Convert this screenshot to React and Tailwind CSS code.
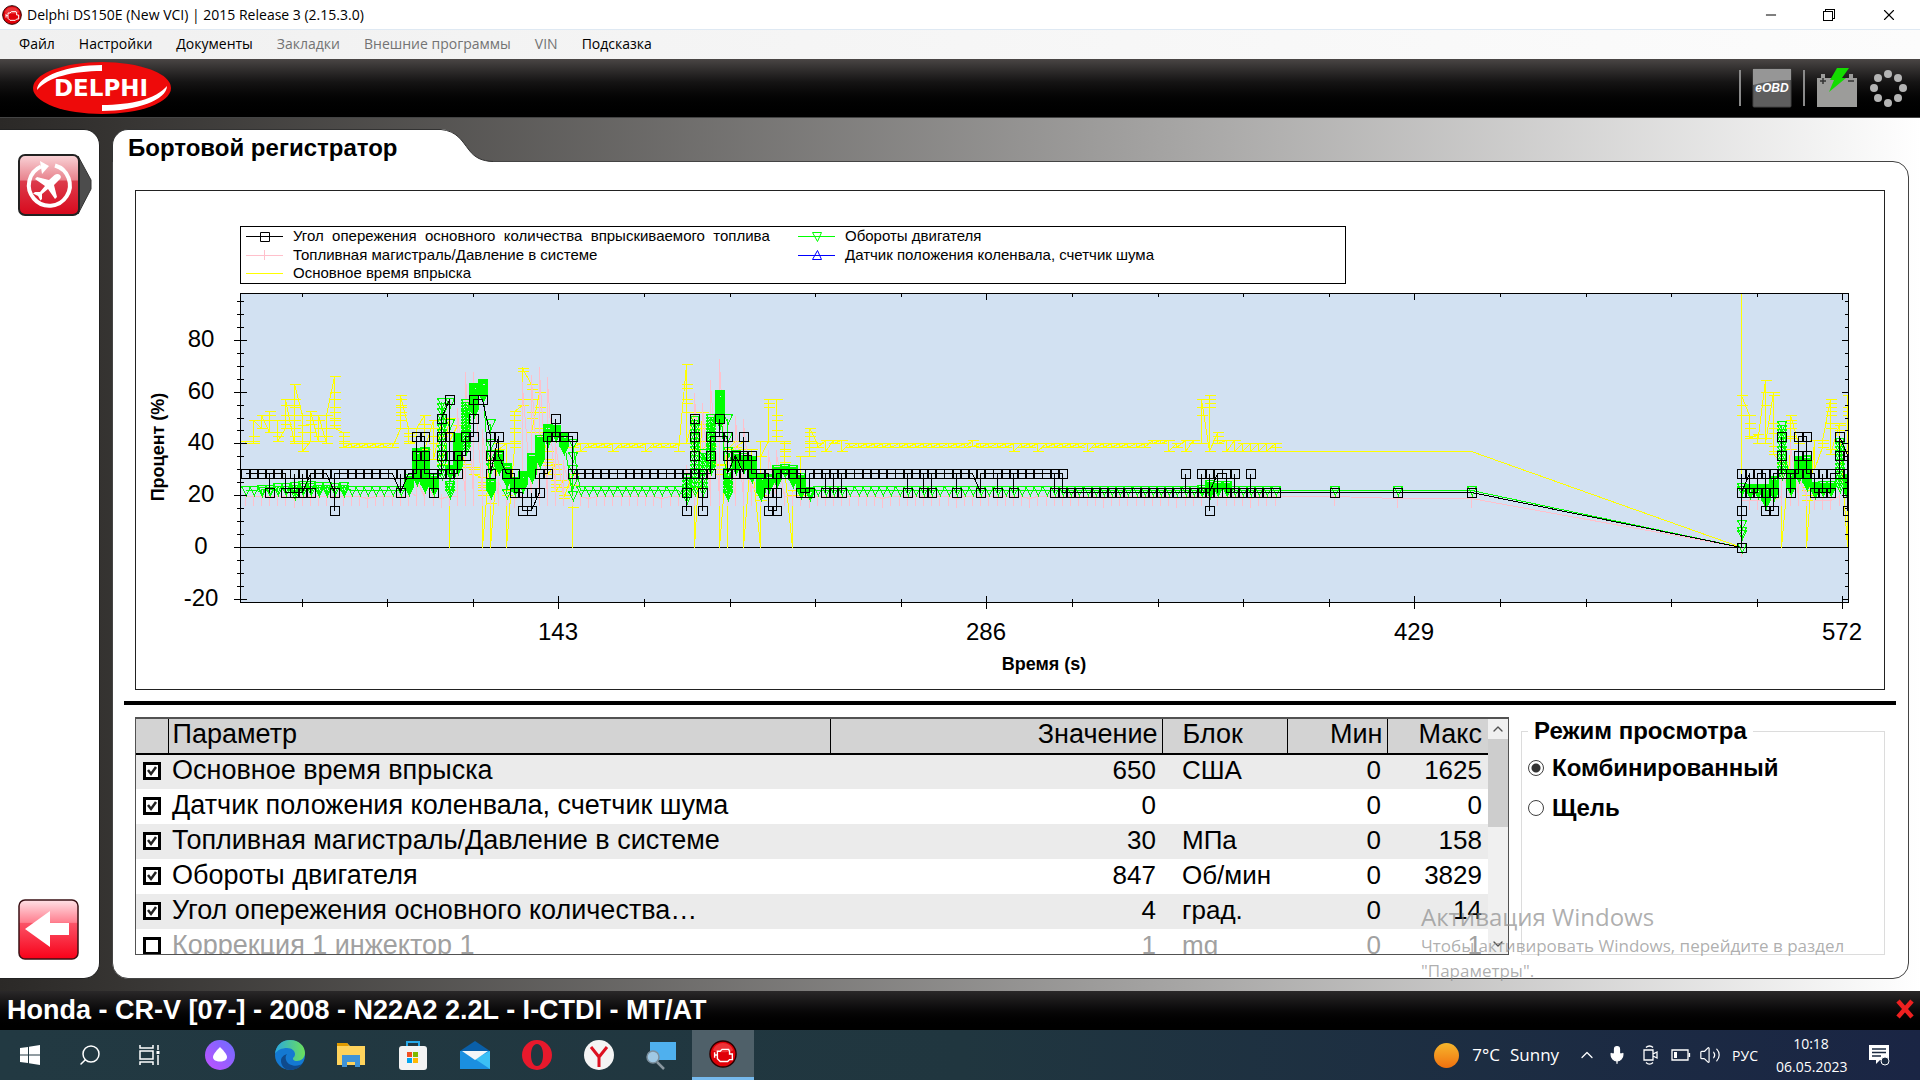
import { useState } from "react"
import { Minus, X, Search, ChevronUp, ChevronDown, Mic, Volume2 } from "lucide-react"
import clsx from "clsx"

// ---- chart geometry ----
const PLOT = { left: 104, right: 1712, top: 102, bottom: 412 }
const ZERO_Y = 356
const UNIT = 2.59
const STEP = 8.175

const px = (k) => Math.round(108.5 + k * STEP)
const py = (v) => Math.round(ZERO_Y - v * UNIT)

const range = (from, to) => Array.from({ length: to - from + 1 }, (_, i) => from + i)

// slow samples between the idle part and the restart
const TAIL = [133.3, 141, 150]
const COLUMNS = [...range(0, 126), ...TAIL, ...range(183, 196)]

// injection angle: every digit is one step of 1/14
const ANGLE = {
  3: "434", 5: "43", 6: "343", 7: "343", 8: "434", 11: "324", 19: "343", 21: "456", 22: "654", 23: "434",
  24: "4567", 25: "8654", 26: "45", 27: "56", 28: "678", 29: "8", 30: "654", 31: "65", 32: "4", 33: "43",
  34: "32", 35: "232", 36: "34", 37: "46", 38: "676", 39: "6", 40: "64", 54: "4324", 55: "45674",
  56: "4234", 57: "456", 58: "676", 59: "654", 60: "545", 61: "4565", 62: "54", 64: "432", 65: "234",
  68: "43", 69: "34", 71: "434", 72: "434", 73: "434", 81: "434", 83: "434", 84: "434", 87: "434",
  90: "34", 92: "434", 94: "434", 99: "434", 100: "43", 115: "343", 117: "343", 118: "3423", 119: "434",
  120: "43", 121: "343", 123: "343", 183: "02343", 184: "43", 185: "34", 186: "432", 187: "234",
  188: "4564", 189: "434", 190: "456", 191: "654", 192: "43", 193: "343", 194: "34", 195: "456", 196: "54323",
}

// engine speed: [low, high, step]
const SPEED = {
  2: [21.5, 23, 1], 3: [21.5, 23, 1], 4: [22, 23.5, 1], 5: [22, 23, 1], 6: [20.5, 24, 1], 7: [22, 24.5, 1],
  8: [22, 24, 1], 9: [21.5, 23.5, 1], 10: [21.5, 23.5, 1], 11: [22, 23.5, 1], 12: [21.5, 23.5, 1],
  20: [22, 26.5], 21: [26, 37], 22: [23, 37], 23: [22, 26.5], 24: [28, 56, 2], 25: [28, 30], 26: [30, 43],
  27: [38, 56, 1.1], 28: [52, 62], 29: [58, 63.5], 30: [21, 25], 31: [30, 36], 32: [25, 31], 33: [22, 26],
  34: [23, 28], 35: [27, 35], 36: [33, 42], 37: [41, 46], 38: [43, 46], 39: [38, 43], 40: [20, 40, 5],
  54: [19, 28, 1.3], 55: [22, 50, 1.7], 56: [22, 37, 1.6], 57: [30, 50, 1.1], 58: [48, 59.5], 59: [20, 29, 1],
  60: [30, 36], 61: [31, 35], 62: [27, 34], 63: [20, 27], 64: [23, 27], 65: [25, 30], 66: [29, 30.5],
  67: [25, 30], 68: [21, 27], 69: [20, 22], 117: [21.5, 23, 1], 118: [21, 24.5], 119: [21.5, 24], 120: [21.5, 24],
  184: [21, 23], 185: [21, 23], 186: [17, 23], 187: [20, 26], 188: [28, 48, 1.6], 189: [22, 29],
  190: [27, 34], 191: [24, 34], 192: [21, 24], 193: [21.5, 24], 194: [21.5, 24], 195: [23, 42, 1.6], 196: [20, 27],
}
const SPEED_EXTRA = { 25: [56, 48, 30, 24, 23, 22, 21], 30: [48, 40, 36, 31], 32: [21], 59: [50, 43, 37], 183: [0, 5, 6, 9, 23, 22] }

// rail pressure: peak over the idle level
const PRESSURE = {
  20: 22, 21: 26, 22: 25, 26: 52, 27: 66, 28: 66, 29: 44, 30: 38, 31: 25, 34: 62, 35: 65, 36: 68, 37: 64,
  38: 40, 39: 32, 40: 30, 54: 30, 55: 58, 56: 54, 57: 63, 58: 71, 59: 38, 60: 49, 61: 48, 62: 24, 64: 36, 65: 36,
  188: 30, 189: 39, 190: 27, 191: 30, 195: 28, 196: 30,
}

// injection time
const TIME = {
  0: [41, 40], 1: [40, 41, 43, 49], 2: [46, 49, 51], 3: [44.5, 51, 52.5, 49], 4: [49, 44.5, 43, 41],
  5: [46, 47.5, 49, 51, 55, 57], 6: [40, 41, 43, 46, 49, 51, 54, 55, 57, 63], 7: [51, 47, 44.5, 41, 40, 37],
  8: [41, 44.5, 47.5, 49, 51, 52.5], 9: [41, 43, 46, 49, 51], 10: [40, 43, 46, 51],
  11: [66, 60, 57, 54, 52, 50, 49, 47, 46], 12: [44.5, 43, 41, 40, 38.5], 19: [46, 49, 51, 52, 54, 55, 57, 58.5],
  20: [46, 44, 43, 41, 40], 21: [41, 43, 46], 22: [51, 47.5, 46, 41, 38], 23: [49, 46, 43, 40, 34],
  24: [48, 43, 32], 25: [50, 44, 22, 0, 41], 26: [47, 41], 27: [32, 31], 28: [31, 30, 28], 29: [27, 25, 24, 23, 22, 20, 0],
  30: [37, 17, 0], 31: [40, 38], 32: [40, 22, 20, 0], 33: [38.5, 40, 41, 44.5, 46, 49, 51, 52.5],
  34: [55, 57, 68, 69], 35: [63, 61, 57, 52, 50, 44.5], 36: [60, 54, 52, 46, 44.5], 37: [37, 34, 33, 31.5, 30, 28],
  38: [32, 30, 28, 26, 24.5, 23, 21.5], 39: [26, 23, 20, 19], 40: [28, 24, 15.5, 0, 38.5],
  54: [70.8, 63, 61.5, 57, 55.5, 52, 40], 55: [52, 38, 23, 0], 56: [52, 47.5, 46, 41, 38], 57: [41, 39, 33],
  58: [32, 31.5, 30, 28, 0], 59: [38, 0, 38], 60: [41, 38.5], 61: [41, 38, 0], 62: [38, 35], 63: [0, 18, 20, 41, 35],
  64: [41, 54, 55.5, 57], 65: [57, 51, 49, 45, 43, 41], 66: [41, 40, 38, 37, 35, 33, 31], 67: [0, 22, 20], 68: [20, 30, 35],
  69: [35, 37, 38.5, 40, 41, 43, 44.5, 46], 71: [41.5, 37], 72: [41.5, 40], 73: [41.5, 37], 76: [40, 38.5],
  89: [41.5, 39], 94: [40, 37], 97: [40, 37], 103: [40, 37], 111: [41.5, 40], 112: [41.5, 40], 113: [41.5, 37],
  115: [41.5, 37], 116: [41.5, 40], 117: [40, 51, 54, 57], 118: [37, 54, 55.5, 57, 58.5, 37], 119: [44.5, 43, 41.5, 40],
  120: [41.5, 37], 121: [41.5, 37], 126: [40, 38.5, 37],
  183: [0, 120, 58.5, 55, 51, 58.5], 184: [51, 48, 46, 43, 42], 185: [43.5, 42, 40], 186: [64.5, 60, 55, 42, 40],
  187: [60, 58.5, 48, 46, 44, 39, 37, 36], 188: [33, 32, 30, 0], 189: [38, 42, 43, 46, 48, 49, 51], 190: [40, 32, 30],
  191: [30, 23, 22, 20, 18, 0], 192: [41.5, 30], 193: [38.5, 40, 41.5], 194: [57, 55.5, 54, 52.5, 51, 48, 46, 38, 36],
  195: [48, 47, 45], 196: [0, 51, 52.5, 54, 58.5],
}

const angleAt = (k) => [...(ANGLE[k] || (k > 100 && k < 183 ? "3" : "4"))].map((d) => (Number(d) * 100) / 14)

function speedAt(k) {
  const out = []
  if (SPEED[k]) {
    const [low, high, step = 0.45] = SPEED[k]
    for (let v = low; v <= high; v += step) out.push(v)
  }
  if (SPEED_EXTRA[k]) out.push(...SPEED_EXTRA[k])
  return out.length ? out : [22.2]
}

const pressureAt = (k) => (PRESSURE[k] ? [19.5, PRESSURE[k]] : k === 183 ? [0, 18] : [k > 183 ? 18 : k % 9 === 6 ? 19 : 19.6])

function timeAt(k) {
  if (TIME[k]) return TIME[k]
  if (k > 126) return [36.9]
  if (k > 40 && k % 4 === 1 && k < 54) return [40, 37]
  if (k > 120) return [40, 37]
  return [40, 38.5]
}

const pointsOf = (valuesAt) => COLUMNS.flatMap((k) => valuesAt(k).map((v) => [px(k), py(v)]))
const linePath = (points) => "M" + points.map((p) => p.join(" ")).join("L")

const markers = {
  square: (x, y) => `M${x - 4} ${y - 4}h9v9h-9z`,
  triangleDown: (x, y) => `M${x - 4} ${y - 4}h9l-4 9z`,
  triangleUp: (x, y) => `M${x - 4} ${y + 4}h9l-4 -9z`,
  plus: (x, y) => `M${x} ${y - 5}v14`,
  dash: (x, y) => `M${x - 5} ${y}h11`,
}

const angle = pointsOf(angleAt)
const speed = pointsOf(speedAt)
const pressure = pointsOf(pressureAt)
const time = pointsOf(timeAt)

const series = [
  { id: "time", color: "#ffff00", points: time, marker: "dash", skip: (p) => p[1] === ZERO_Y || TAIL.some((k) => px(k) === p[0]) },
  { id: "pressure", color: "#ffc0cb", points: pressure, marker: "plus" },
  { id: "speed", color: "#00ff00", points: speed, marker: "triangleDown" },
  { id: "angle", color: "#000000", points: angle, marker: "square" },
]

// the recorder separates the words of the long name with two blanks
const legend = [
  { x: 110, y: 45, color: "#000000", marker: "square", text: "Угол опережения основного количества впрыскиваемого топлива".replaceAll(" ", "\u00a0 ") },
  { x: 110, y: 64, color: "#ffc0cb", marker: "plus", text: "Топливная магистраль/Давление в системе" },
  { x: 110, y: 82, color: "#ffff00", marker: null, text: "Основное время впрыска" },
  { x: 662, y: 45, color: "#00ff00", marker: "triangleDown", text: "Обороты двигателя" },
  { x: 662, y: 64, color: "#0000ff", marker: "triangleUp", text: "Датчик положения коленвала, счетчик шума" },
]

function Chart() {
  const xMinor = range(0, 17).map((i) => Math.round(165.6 + i * 85.6))
  const yMinor = range(-4, 19).map((i) => py(i * 5))
  return (
    <svg viewBox="0 0 1748 498" className="block w-full" role="img" aria-label="Процент / Время" fontFamily="Liberation Sans, Arial, sans-serif">
      <defs>
        <clipPath id="plot">
          <rect x={PLOT.left} y={PLOT.top} width={PLOT.right - PLOT.left} height={PLOT.bottom - PLOT.top} />
        </clipPath>
      </defs>

      <rect x="104.5" y="35.5" width="1105" height="57" fill="white" stroke="black" />
      {legend.map((item) => (
        <g key={item.text}>
          <path d={`M${item.x} ${item.y + 0.5}h37`} stroke={item.color} fill="none" />
          {item.marker && (
            <path
              d={item.marker === "plus" ? `M${item.x + 18.5} ${item.y - 5}v10` : markers[item.marker](item.x + 18.5, item.y + 0.5)}
              stroke={item.color}
              fill="none"
            />
          )}
          <text x={item.x + 47} y={item.y + 5} fontSize="15">{item.text}</text>
        </g>
      ))}

      <rect x="104.5" y="102.5" width="1608" height="309" fill="#d2e1f2" />
      <path d={`M104 ${ZERO_Y + 0.5}H1712`} stroke="black" />
      <g clipPath="url(#plot)" fill="none" shapeRendering="crispEdges" transform="translate(0.5 0.5)">
        {series.map((s) => (
          <g key={s.id} stroke={s.color}>
            <path d={linePath(s.points)} />
            <path d={s.points.filter((p) => !s.skip || !s.skip(p)).map((p) => markers[s.marker](p[0], p[1])).join("")} />
          </g>
        ))}
      </g>
      <rect x="104.5" y="102.5" width="1608" height="309" fill="none" stroke="black" />

      <g stroke="black" fill="none" shapeRendering="crispEdges">
        {xMinor.map((x) => <path key={x} d={`M${x + 0.5} 408v8M${x + 0.5} 102v4`} />)}
        {yMinor.map((y) => <path key={y} d={`M101 ${y + 0.5}h7M1709 ${y + 0.5}h4`} />)}
        {[422, 850, 1278, 1706].map((x) => <path key={x} d={`M${x + 0.5} 405v13M${x + 0.5} 102v7`} />)}
        {[-20, 0, 20, 40, 60, 80].map((v) => <path key={v} d={`M98 ${py(v) + 0.5}h13M1706 ${py(v) + 0.5}h6`} />)}
      </g>

      <g fontSize="24" textAnchor="middle">
        {[-20, 0, 20, 40, 60, 80].map((v) => <text key={v} x="65" y={py(v) + 7}>{v}</text>)}
        {[143, 286, 429, 572].map((v, i) => <text key={v} x={422 + i * 428} y="449">{v}</text>)}
      </g>
      <g fontSize="18" fontWeight="bold" textAnchor="middle">
        <text x="908" y="479">Время (s)</text>
        <text transform="translate(28 256) rotate(-90)">Процент (%)</text>
      </g>
    </svg>
  )
}

function EngineIcon({ className }) {
  return (
    <svg viewBox="0 0 30 30" className={className}>
      <circle cx="15" cy="15" r="14" fill="#e00008" stroke="#2a0000" strokeWidth="1.5" />
      <path d="M4 11a11.500 11 0 0 1 22 0c-6 3-16 3-22 0z" fill="#ff8080" opacity=".4" />
      <path d="M6 13v6M6 16h3v-4h3l2-2h7l1 2v3h3v6h-3l-2 2h-8l-3-3H9v-4" fill="none" stroke="white" strokeWidth="1.5" />
    </svg>
  )
}

function DelphiLogo() {
  return (
    <svg viewBox="0 0 138 52" className="h-[52px] w-[138px]" role="img" aria-label="Delphi">
      <ellipse cx="69" cy="26" rx="69" ry="26" fill="#ee0a0a" />
      <path d="M69 3v6C40 9 15 15 4 28 4 14 35 3 69 3z" fill="white" />
      <path d="M69 49v-6c29 0 54-6 65-19 0 14-31 25-65 25z" fill="white" />
      <text x="68" y="34" textAnchor="middle" fontFamily="DejaVu Sans, sans-serif" fontWeight="bold" fontSize="23" fill="white">DELPHI</text>
    </svg>
  )
}

const menu = [
  { text: "Файл" },
  { text: "Настройки" },
  { text: "Документы" },
  { text: "Закладки", disabled: true },
  { text: "Внешние программы", disabled: true },
  { text: "VIN", disabled: true },
  { text: "Подсказка" },
]

const rows = [
  { name: "Основное время впрыска", value: 650, unit: "США", min: 0, max: 1625, on: true },
  { name: "Датчик положения коленвала, счетчик шума", value: 0, unit: "", min: 0, max: 0, on: true },
  { name: "Топливная магистраль/Давление в системе", value: 30, unit: "МПа", min: 0, max: 158, on: true },
  { name: "Обороты двигателя", value: 847, unit: "Об/мин", min: 0, max: 3829, on: true },
  { name: "Угол опережения основного количества…", value: 4, unit: "град.", min: 0, max: 14, on: true },
  { name: "Коррекция 1 инжектор 1", value: 1, unit: "mg", min: 0, max: 1, on: false },
]

function ParameterTable() {
  const [checked, setChecked] = useState(rows.map((r) => r.on))
  const toggle = (i) => setChecked(checked.map((c, j) => (j === i ? !c : c)))

  return (
    <div className="flex h-[238px] flex-1 overflow-hidden border border-t-2 border-neutral-600">
      <div className="flex-1">
        <table className="w-full table-fixed border-collapse text-[26px] leading-[30px]">
          <colgroup>
            <col className="w-8" />
            <col />
            <col className="w-[332px]" />
            <col className="w-[125px]" />
            <col className="w-[100px]" />
            <col className="w-[101px]" />
          </colgroup>
          <thead>
            <tr className="h-[35px] border-b-2 border-black bg-[#d3d3d3] text-left text-[27px]">
              <th className="border-r border-black p-0"></th>
              <th className="border-r border-black p-0 pb-1 pl-1 font-normal">Параметр</th>
              <th className="border-r border-black p-0 pr-1 pb-1 text-right font-normal">Значение</th>
              <th className="border-r border-black p-0 pb-1 pl-5 font-normal">Блок</th>
              <th className="border-r border-black p-0 pr-1 pb-1 text-right font-normal">Мин</th>
              <th className="p-0 pr-[6px] pb-1 text-right font-normal">Макс</th>
            </tr>
          </thead>
          <tbody>
            {rows.map((row, i) => (
              <tr key={row.name} className={clsx("h-[35px] odd:bg-[#ebebeb]", !row.on && "text-neutral-400")}>
                <td className="p-0 pb-[2px] pl-[7px]">
                  <span className="relative block size-[18px]">
                    <input
                      type="checkbox"
                      id={"param" + i}
                      checked={checked[i]}
                      onChange={() => toggle(i)}
                      className="block size-[18px] appearance-none border-3 border-black bg-white"
                    />
                    {checked[i] && (
                      <svg viewBox="0 0 18 18" className="pointer-events-none absolute inset-0">
                        <path d="M5 8l3 4 5-7" fill="none" stroke="#222" strokeWidth="2.5" />
                      </svg>
                    )}
                  </span>
                </td>
                <td className="truncate p-0 pb-1 pl-1 text-[27px]"><label htmlFor={"param" + i}>{row.name}</label></td>
                <td className="p-0 pr-[6px] pb-1 text-right">{row.value}</td>
                <td className="p-0 pb-1 pl-5">{row.unit}</td>
                <td className="p-0 pr-[6px] pb-1 text-right">{row.min}</td>
                <td className="p-0 pr-[6px] pb-1 text-right">{row.max}</td>
              </tr>
            ))}
          </tbody>
        </table>
      </div>
      <div className="flex w-5 flex-col items-center bg-[#f0f0f0]">
        <button type="button" aria-label="Вверх" className="flex h-5 items-center"><ChevronUp className="size-4 text-neutral-600" /></button>
        <div className="h-[88px] w-full bg-[#cdcdcd]"></div>
        <button type="button" aria-label="Вниз" className="mt-auto flex h-5 items-center"><ChevronDown className="size-4 text-neutral-600" /></button>
      </div>
    </div>
  )
}

function ViewMode() {
  const [mode, setMode] = useState("combined")
  const modes = [
    { id: "combined", text: "Комбинированный" },
    { id: "split", text: "Щель" },
  ]
  return (
    <fieldset className="h-[238px] w-[364px] border border-[#dcdcdc] pl-[6px] text-2xl font-bold">
      <legend className="ml-0 px-[6px] leading-[28px]">Режим просмотра</legend>
      <div className="flex flex-col gap-3 pt-[9px]">
        {modes.map((m) => (
          <label key={m.id} className="flex items-center gap-2 leading-[28px]">
            <input
              type="radio"
              name="mode"
              checked={mode === m.id}
              onChange={() => setMode(m.id)}
              className="size-4 appearance-none rounded-full border border-neutral-700 bg-white checked:bg-[radial-gradient(circle,#333_0_4px,#fff_5px)]"
            />
            {m.text}
          </label>
        ))}
      </div>
    </fieldset>
  )
}

function Sidebar() {
  return (
    <aside className="flex w-[100px] flex-col justify-between rounded-r-2xl border-y border-r border-[#222] bg-white pt-6 pb-[18px] pl-[18px]">
      <button type="button" aria-label="Бортовой регистратор" className="w-fit">
        <svg viewBox="0 0 74 62" className="h-[62px] w-[74px]">
          <defs>
            <linearGradient id="red1" x2="0" y2="1">
              <stop offset="0" stopColor="#f9d4d8" />
              <stop offset=".42" stopColor="#e8828c" />
              <stop offset=".43" stopColor="#dc3c4c" />
              <stop offset="1" stopColor="#d8081c" />
            </linearGradient>
          </defs>
          <path d="M60 2l13 24v9L60 60z" fill="#4c4c4c" stroke="#333" />
          <rect x="1" y="1" width="60" height="60" rx="6" fill="url(#red1)" stroke="#222" strokeWidth="2" />
          <path d="M37 11.500a20.500 20.500 0 1 1-14 1" fill="none" stroke="white" strokeWidth="4" />
          <path d="M22 7l9 5-7 8z" fill="white" />
          <path d="M42 21c1.500 1.500 1 3-.5 4.500L36 31l3 12-2 2-7-10-6 5v5l-1.500 1.500L20 42l-5-2.500 2-1.500h5l5-6-10-7 2-2 12 3 5.500-5c2-1.500 4-1.500 5.500 0z" fill="white" />
        </svg>
      </button>
      <button type="button" aria-label="Назад" className="w-fit">
        <svg viewBox="0 0 61 61" className="size-[61px]">
          <defs>
            <linearGradient id="red2" x2="0" y2="1">
              <stop offset="0" stopColor="#ffe1e6" />
              <stop offset=".38" stopColor="#ff7f8f" />
              <stop offset=".39" stopColor="#fb5468" />
              <stop offset="1" stopColor="#f80018" />
            </linearGradient>
          </defs>
          <rect x="1" y="1" width="59" height="59" rx="6" fill="url(#red2)" stroke="#3a1015" strokeWidth="1.500" />
          <path d="M7 30l25-18v12h19v12H32v12z" fill="white" />
        </svg>
      </button>
    </aside>
  )
}

function StatusIcons() {
  return (
    <div className="flex items-center gap-[11px] pr-[13px]">
      <span className="h-9 w-[2px] bg-[#8a8a8a]"></span>
      <svg viewBox="0 0 40 40" className="size-10">
        <rect x="1" y="1" width="38" height="38" rx="1" fill="#5e5e5e" stroke="#444" />
        <path d="M1 1h38v11C24 12 12 14 1 17z" fill="#969696" />
        <text x="20" y="24" textAnchor="middle" fontFamily="Liberation Sans, sans-serif" fontStyle="italic" fontWeight="bold" fontSize="12" fill="white">eOBD</text>
      </svg>
      <span className="h-9 w-[2px] bg-[#8a8a8a]"></span>
      <svg viewBox="0 0 42 40" className="h-10 w-[42px]">
        <path d="M1 10h4V6h4v4h24V6h4v4h4v29H1z" fill="#9c9c9a" />
        <path d="M4 13h6M7 10v6M32 13h6" stroke="#333" strokeWidth="1.500" />
        <path d="M21 0h12l-7 10h4L13 24l5-12h-4z" fill="#14dc00" />
      </svg>
      <svg viewBox="0 0 38 38" className="size-[38px]" fill="#b4b4b4">
        {range(0, 7).map((i) => (
          <circle key={i} cx={19 + Math.round(14.5 * Math.cos((i * Math.PI) / 4))} cy={19 + Math.round(14.5 * Math.sin((i * Math.PI) / 4))} r="4" />
        ))}
      </svg>
    </div>
  )
}

function TaskbarApps() {
  const item = "flex h-[50px] w-[62px] items-center justify-center"
  return (
    <div className="flex">
      <button type="button" aria-label="Пуск" className="flex h-[50px] w-[60px] items-center justify-center">
        <svg viewBox="0 0 20 20" className="size-5" fill="white">
          <path d="M0 3l8-1v7.500H0zM9 1.800L20 0v9.500H9zM0 10.500h8V18l-8-1zM9 10.500h11V20L9 18.200z" />
        </svg>
      </button>
      <button type="button" aria-label="Поиск" className="flex h-[50px] w-[60px] items-center justify-center">
        <Search className="size-6 -scale-x-100 text-white" strokeWidth={1.5} />
      </button>
      <button type="button" aria-label="Представление задач" className="flex h-[50px] w-[60px] items-center justify-center">
        <svg viewBox="0 0 22 20" className="h-5 w-[22px]" fill="none" stroke="white" strokeWidth="1.500">
          <path d="M1 0v3h13V0M1 20v-3h13v3M1 6h13v8H1zM19 0v5M19 10v10" />
          <path d="M17.500 6h3v3h-3z" fill="white" stroke="none" />
        </svg>
      </button>
      <button type="button" aria-label="Алиса" className="flex h-[50px] w-20 items-center justify-center">
        <svg viewBox="0 0 30 30" className="size-[30px]">
          <defs>
            <linearGradient id="alice" x1="1" x2="0" y2="1">
              <stop offset="0" stopColor="#6c6cff" />
              <stop offset="1" stopColor="#c251ff" />
            </linearGradient>
          </defs>
          <circle cx="15" cy="15" r="15" fill="url(#alice)" />
          <path d="M15 7c2 2 7 7 7 10s-3 4.500-7 4.500S8 20 8 17s5-8 7-10z" fill="white" />
        </svg>
      </button>
      <button type="button" aria-label="Edge" className="flex h-[50px] w-[60px] items-center justify-center">
        <svg viewBox="0 0 30 30" className="size-[30px]">
          <defs>
            <linearGradient id="edge">
              <stop offset="0" stopColor="#2aa8e0" />
              <stop offset="1" stopColor="#6be05a" />
            </linearGradient>
          </defs>
          <circle cx="15" cy="15" r="15" fill="#1479d2" />
          <path d="M0 14C1 5 7 0 15 0c9 0 15 6 15 13 0 5-4 8-8 8s-4-2-4-3c1-1 2-2 2-4 0-3-3-6-8-6S2 10 0 14z" fill="url(#edge)" />
          <path d="M12 14c-2 2-2 7 2 10 5 3 11 2 14-1-3 5-8 7-13 7-6 0-9-5-9-9s3-6 6-7z" fill="#0f4a8c" />
        </svg>
      </button>
      <button type="button" aria-label="Проводник" className={item}>
        <svg viewBox="0 0 30 26" className="h-[26px] w-[30px]">
          <path d="M1 1h10l3 3h15v19H1z" fill="#ffd35c" />
          <path d="M1 1h10l2 3H1z" fill="#e09b00" />
          <path d="M6 25V13h18v12h-5v-5h-8v5z" fill="#3f93d8" />
        </svg>
      </button>
      <button type="button" aria-label="Магазин" className={item}>
        <svg viewBox="0 0 30 30" className="size-[30px]">
          <path d="M9 6V2h12v4" fill="none" stroke="#27a8e8" strokeWidth="2" />
          <rect x="1" y="6" width="28" height="24" rx="3" fill="#f3f3f3" />
          <path d="M9 12h5v5H9z" fill="#f25022" />
          <path d="M15 12h5v5h-5z" fill="#7fba00" />
          <path d="M9 18h5v5H9z" fill="#00a4ef" />
          <path d="M15 18h5v5h-5z" fill="#ffb900" />
        </svg>
      </button>
      <button type="button" aria-label="Почта" className={item}>
        <svg viewBox="0 0 30 28" className="h-7 w-[30px]">
          <path d="M0 10L15 0l15 10z" fill="#0a5fa8" />
          <path d="M0 10h30v18H0z" fill="#1b8fe0" />
          <path d="M30 10v18L15 18z" fill="#3cc0f5" />
          <path d="M2 10h26L15 19z" fill="#f4f6f8" />
        </svg>
      </button>
      <button type="button" aria-label="Opera" className={item}>
        <svg viewBox="0 0 30 30" className="size-[30px]">
          <path d="M15 0a15 15 0 1 0 0 30 15 15 0 1 0 0-30zm0 4c4 0 6 5 6 11s-2 11-6 11-6-5-6-11 2-11 6-11z" fill="#e8192c" fillRule="evenodd" />
        </svg>
      </button>
      <button type="button" aria-label="Яндекс" className={item}>
        <svg viewBox="0 0 30 30" className="size-[30px]">
          <circle cx="15" cy="15" r="15" fill="#f4f4f4" />
          <path d="M7 7l8 10 8-10M15 16v11" fill="none" stroke="#dd1020" strokeWidth="3" />
        </svg>
      </button>
      <button type="button" aria-label="Просмотр" className={item}>
        <svg viewBox="0 0 30 30" className="size-[30px]">
          <path d="M4 2h26v18H4z" fill="#4fb0ee" />
          <circle cx="7" cy="17" r="6" fill="#9fc8e4" stroke="#7c8f9d" strokeWidth="1.500" />
          <path d="M11 22l7 7" stroke="#8a97a0" strokeWidth="2.500" />
        </svg>
      </button>
      <button type="button" aria-label="Delphi" className="flex h-[50px] w-[62px] items-center justify-center border-b-3 border-[#76b9ed] bg-[#4f6069]">
        <EngineIcon className="size-[28px]" />
      </button>
    </div>
  )
}

function Tray() {
  return (
    <div className="flex items-center pr-[30px] font-['Open_Sans',sans-serif] text-white">
      <span className="size-[25px] rounded-full bg-gradient-to-b from-[#f5b62c] to-[#f0700e]"></span>
      <span className="ml-[13px] flex gap-[10px] text-[17px]"><span>7°C</span><span>Sunny</span></span>
      <ChevronUp className="ml-[18px] size-5" strokeWidth={1.5} />
      <Mic className="ml-[10px] size-5" fill="white" strokeWidth={1.5} />
      <svg viewBox="0 0 16 20" className="ml-4 h-5 w-4" fill="none" stroke="white" strokeWidth="1.300">
        <path d="M1 5h9v10H1zM10 9l4-2v6l-4-2M3 2.500c2-2 5-2 7 0M3 17.500c2 2 5 2 7 0" />
      </svg>
      <svg viewBox="0 0 20 14" className="ml-3 h-[14px] w-5" fill="none" stroke="white" strokeWidth="1.300">
        <path d="M1 2h16v10H1zM18.500 5v4" />
        <path d="M3 4h3v6H3z" fill="white" stroke="none" />
      </svg>
      <Volume2 className="ml-2 size-[22px]" strokeWidth={1.3} />
      <span className="ml-[11px] text-[14px]">РУС</span>
      <span className="ml-[18px] w-[70px] text-center text-[14px] leading-[23px]">10:18<br />06.05.2023</span>
      <svg viewBox="0 0 22 22" className="ml-[22px] size-[22px]">
        <path d="M1 1h20v15h-9l-4 4v-4H1z" fill="white" />
        <path d="M4 5h14M4 8.500h14M4 12h9" stroke="#1b2a40" strokeWidth="1.300" />
        <circle cx="17" cy="17" r="4" fill="#1b2a40" stroke="white" />
      </svg>
    </div>
  )
}

export default function App() {
  return (
    <div className="relative flex min-h-screen flex-col bg-white font-['Liberation_Sans',Arial,sans-serif] text-black">
      {/* Title bar */}
      <header className="flex h-[29px] items-center justify-between pl-[2px] font-['Open_Sans',sans-serif] text-[14px]">
        <div className="flex items-center gap-[5px]">
          <EngineIcon className="size-5" />
          <h1>Delphi DS150E (New VCI) | 2015 Release 3 (2.15.3.0)</h1>
        </div>
        <div className="flex items-center">
          <button type="button" aria-label="Свернуть" className="flex w-[58px] justify-center"><Minus className="size-4" strokeWidth={1.5} /></button>
          <button type="button" aria-label="Восстановить" className="flex w-[58px] justify-center">
            <svg viewBox="0 0 12 12" className="size-3" fill="none" stroke="black" shapeRendering="crispEdges">
              <path d="M.5 2.500h9v9h-9zM2.500 2V.5h9v9H10" />
            </svg>
          </button>
          <button type="button" aria-label="Закрыть" className="flex w-[62px] justify-center"><X className="size-[18px]" strokeWidth={1.5} /></button>
        </div>
      </header>

      <nav className="flex h-[30px] items-center gap-6 border-t border-[#dfe9f3] bg-gradient-to-r from-[#f0f0f0] to-[#fcfcfc] pl-[19px] font-['Open_Sans',sans-serif] text-[14px] leading-[28px]">
        {menu.map((m) => (
          <button key={m.text} type="button" disabled={m.disabled} className="pb-[2px] disabled:text-neutral-500">{m.text}</button>
        ))}
      </nav>

      {/* Brand bar */}
      <div className="flex h-[59px] items-center justify-between border-b border-[#444] bg-gradient-to-b from-[#4a4645] via-[#151414] via-40% to-black pl-[33px]">
        <DelphiLogo />
        <StatusIcons />
      </div>

      {/* Work area */}
      <div className="flex flex-1 bg-gradient-to-r from-[#2b2927] to-white pt-[11px] pb-3">
        <Sidebar />
        <main className="mr-[11px] ml-3 flex min-w-0 flex-1 flex-col">
          <div className="relative -mb-px flex h-[33px]">
            <h2 className="w-[329px] rounded-tl-2xl border-t border-l border-[#333] bg-white pl-[15px] text-2xl leading-[36px] font-bold">Бортовой регистратор</h2>
            <svg viewBox="0 0 52 33" className="h-[33px] w-[52px]">
              <path d="M0 0C16 2 21 12 28 21c6 8 13 11 24 12H0z" fill="white" />
              <path d="M0 .5C16 2 21 12 28 21c6 8 13 11 24 11.500" fill="none" stroke="#333" />
            </svg>
          </div>
          <div className="flex flex-1 flex-col rounded-tr-2xl rounded-b-2xl border border-[#444] bg-white pt-7 pr-3 pb-[22px] pl-[11px]">
            <section className="mx-[11px] border border-[#222]">
              <Chart />
            </section>
            <hr className="mt-[11px] h-1 border-0 bg-black" />
            <section className="mx-[11px] mt-3 flex gap-3">
              <ParameterTable />
              <ViewMode />
            </section>
          </div>
        </main>
      </div>

      <footer className="flex h-[39px] items-center justify-between bg-gradient-to-b from-[#2a2829] to-black pr-[5px] pl-[7px] text-[27px] leading-[39px] font-bold text-white">
        <span>Honda - CR-V [07-] - 2008 - N22A2 2.2L - I-CTDI - MT/AT</span>
        <svg viewBox="0 0 20 20" className="mb-1 size-5">
          <path d="M3 2l14 16M17 2L3 18" stroke="#ee2020" strokeWidth="4.500" />
        </svg>
      </footer>

      {/* Taskbar */}
      <div className="flex h-[50px] justify-between bg-gradient-to-r from-[#223942] via-[#20363f] via-50% to-[#1a2544]">
        <TaskbarApps />
        <Tray />
      </div>

      {/* Activation watermark */}
      <div className="pointer-events-none absolute right-[79px] bottom-[97px] w-[420px] font-['Open_Sans',sans-serif] text-[#8c8c8c]/70">
        <p className="text-[24px] leading-[32px]">Активация Windows</p>
        <p className="text-[17px] leading-[25px] whitespace-nowrap">Чтобы активировать Windows, перейдите в раздел<br />"Параметры".</p>
      </div>
    </div>
  )
}
